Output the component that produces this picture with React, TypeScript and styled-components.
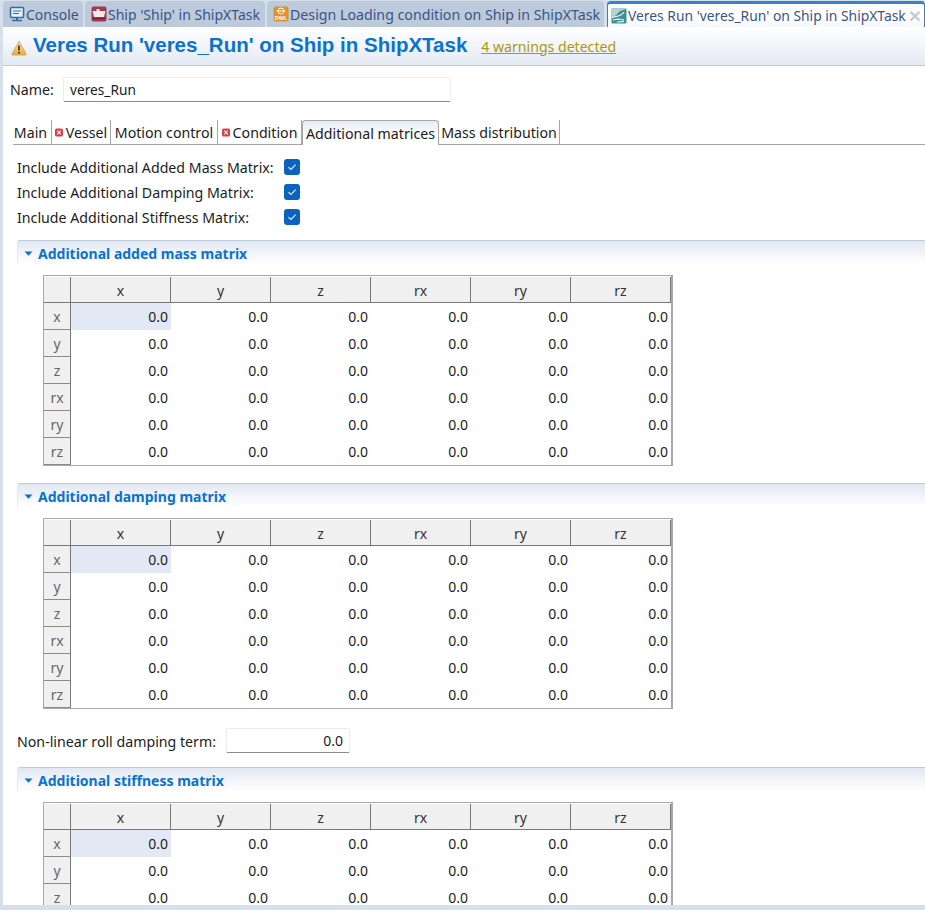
import React from "react";
import styled, { createGlobalStyle } from "styled-components";

const Global = createGlobalStyle`
  html, body { margin: 0; padding: 0; background: #d6e0ec; }
  body { font-family: "Noto Sans", "Liberation Sans", sans-serif; font-size: 14px; color: #1c1c1c; }
  * { box-sizing: border-box; }
`;

const Frame = styled.div`
  width: 925px; height: 910px; overflow: hidden; background: #d6e0ec;
  display: flex; flex-direction: column; padding: 0 0 5px 3px;
`;
const EditorTabs = styled.div`
  height: 27px; flex: none; display: flex; gap: 2px; padding-top: 1px; align-items: stretch;
`;
const EditorTab = styled.div<{ $w: number; $size: number; $active?: boolean }>`
  width: ${(p) => p.$w}px; flex: none; height: 26px;
  display: flex; align-items: center; gap: 1px; padding: 0 0 0 6px;
  font-size: ${(p) => p.$size}px; white-space: nowrap; overflow: hidden;
  color: #3b5488; border-radius: 4px 4px 0 0;
  background: ${(p) => (p.$active ? "linear-gradient(#fff, #fff 60%, #f4f7fb)" : "#bccadb")};
  ${(p) => p.$active && "border: 1px solid #3a82c8; border-top: 3px solid #3a82c8; border-bottom: 0; padding-left: 3px; margin-left: 1px;"}
  svg { flex: none; }
`;
const CloseMark = styled.span`
  margin-left: auto; margin-right: 3px; color: #c8cbce; font-size: 21px; font-weight: 700; line-height: 1;
  font-family: "Liberation Sans", sans-serif;
`;
const Page = styled.div`
  flex: 1; min-height: 0; overflow: hidden; background: #fff; display: flex; flex-direction: column;
`;
const Header = styled.div`
  height: 39px; flex: none; display: flex; align-items: center; padding-left: 8px; gap: 6px;
  background: linear-gradient(#fff, #e4eaf3);
  border-bottom: 1px solid #bfcbd6;
  svg { flex: none; margin-top: 4px; }
`;
const Title = styled.h1`
  margin: 0 0 2px; font: bold 20.5px "Liberation Sans", sans-serif; color: #0a72cf; white-space: nowrap;
`;
const Warnings = styled.a`
  margin-left: 8px; color: #a89a10; font-size: 14.1px; text-decoration: underline; white-space: nowrap;
`;
const Body = styled.div`
  flex: 1; min-height: 0; overflow: hidden; padding: 11px 0 0 0;
`;
const NameRow = styled.div`
  display: flex; align-items: center; padding-left: 7px; height: 25px;
`;
const NameLabel = styled.label`
  width: 53px; font-size: 14.2px;
`;
const NameField = styled.div`
  width: 388px; height: 25px; border: 1px solid #ececec; border-bottom: 1px solid #8a8a8a;
  border-radius: 2px; padding-left: 6px; display: flex; align-items: center; font-size: 13.7px;
`;
const FormTabs = styled.div`
  display: flex; height: 25px; margin: 18px 0 0 10px; border-bottom: 1px solid #a6a6a6; align-items: stretch;
`;
const FormTab = styled.div<{ $w: number; $active?: boolean; $inset?: number }>`
  width: ${(p) => p.$w}px; flex: none; display: flex; align-items: center; justify-content: center; gap: 3px;
  font-size: 14.2px; white-space: nowrap; padding-top: 1px;
  padding-right: ${(p) => p.$inset ?? 0}px;
  border-right: 1px solid #a6a6a6;
  ${(p) =>
    p.$active &&
    "border: 1px solid #a6a6a6; border-bottom: 0; border-radius: 4px 4px 0 0; background: linear-gradient(#e6ecf5, #fff 70%); margin-bottom: -1px;"}
`;
const Checks = styled.div`
  display: flex; flex-direction: column; margin-top: 9px; padding-left: 14px;
`;
const CheckRow = styled.div`
  height: 25px; display: flex; align-items: center; font-size: 14.2px;
`;
const CheckLabel = styled.span`
  width: 267px; white-space: nowrap; padding-top: 1px;
`;
const CheckBox = styled.span`
  width: 16px; height: 16px; border-radius: 3px; background: #0b63bd; display: flex; align-items: center; justify-content: center;
`;
const Section = styled.section<{ $top: number }>`
  margin: ${(p) => p.$top}px 0 0 14px;
`;
const SectionHead = styled.div`
  height: 24px; border-top: 1px solid #bccbda; border-left: 1px solid #e4eaf2; border-radius: 3px 0 0 0;
  background: linear-gradient(#e2e8f2, #fff);
  display: flex; align-items: center; padding: 1px 0 0 6px; gap: 5px;
  font: bold 14px "Noto Sans", sans-serif; color: #0a72cf;
`;
const Grid = styled.div`
  margin: 11px 0 0 26px; width: 630px; height: 191px; border: 2px solid #a8a8a8; border-width: 1px 2px 1px 1px;
  padding: 1px 1px 0 0; display: grid; grid-template-columns: 27px repeat(6, 100px); grid-template-rows: 26px repeat(6, 27px);
  align-content: start;
`;
const ColHead = styled.div`
  background: #f0f0f0; display: flex; align-items: center; justify-content: center; padding-top: 1px;
  border-right: 1px solid #787878; border-bottom: 1px solid #787878; color: #333; font-size: 14px;
`;
const RowHead = styled.div`
  background: #f0f0f0; display: flex; align-items: center; justify-content: center;
  border-right: 1px solid #787878; border-bottom: 1px solid #8c8c8c; color: #666; font-size: 14px;
`;
const Cell = styled.div<{ $sel?: boolean }>`
  display: flex; align-items: center; justify-content: flex-end; padding-right: 3px; font-size: 14px;
  color: #1c1c1c;
  background: ${(p) => (p.$sel ? "#e2e9f5" : "transparent")};
`;
const RollRow = styled.div`
  display: flex; align-items: center; height: 25px; margin: 19px 0 0 14px; font-size: 14.2px;
`;
const RollLabel = styled.span`
  width: 209px; white-space: nowrap; padding-top: 1px;
`;
const RollField = styled.div`
  width: 124px; height: 25px; border: 1px solid #ececec; border-bottom: 1px solid #8a8a8a; border-radius: 2px;
  display: flex; align-items: center; justify-content: flex-end; padding-right: 6px; font-size: 14px;
`;

const ConsoleIcon = () => (
  <svg width="16" height="16" viewBox="0 0 16 16">
    <rect x="1.5" y="1.5" width="13" height="10" rx="1" fill="#e8f1fa" stroke="#2f6ea8" strokeWidth="1.6" />
    <path d="M4 5h8M4 7.5h6" stroke="#2f6ea8" strokeWidth="1.2" />
    <path d="M3 14.5h10" stroke="#2f6ea8" strokeWidth="1.6" />
    <path d="M7 12h2v2H7z" fill="#2f6ea8" />
  </svg>
);
const ShipIcon = () => (
  <svg width="16" height="16" viewBox="0 0 16 16">
    <rect x="0.5" y="0.5" width="15" height="15" rx="2" fill="#a53a4c" />
    <path d="M1.5 5h4V3h3v2h6l-1.5 6H3z" fill="#f3e8ea" />
    <path d="M1 12.5h14" stroke="#7d2434" strokeWidth="1.5" />
  </svg>
);
const DwlIcon = () => (
  <svg width="16" height="16" viewBox="0 0 16 16">
    <rect x="0.5" y="0.5" width="15" height="15" rx="2" fill="#e2902a" />
    <circle cx="8" cy="5" r="3" fill="none" stroke="#fff" strokeWidth="1" />
    <path d="M3.5 5h9" stroke="#fff" strokeWidth="1" />
    <text x="8" y="14" textAnchor="middle" fontSize="5.5" fontWeight="700" fontFamily="Liberation Sans" fill="#fff">DWL</text>
  </svg>
);
const VeresIcon = () => (
  <svg width="16" height="16" viewBox="0 0 16 16">
    <rect x="0.5" y="0.5" width="15" height="15" rx="1" fill="#3f9092" />
    <path d="M0.5 10 Q6 7 9 3 L15.5 1 V0.5 H0.5z" fill="#b6d3d3" />
    <path d="M1 9.5l8-2 4-3M2 12l5-1 6 1M6 14l7-.5" stroke="#fff" strokeWidth="1.1" fill="none" />
  </svg>
);
const WarnIcon = () => (
  <svg width="16" height="16" viewBox="0 0 16 16">
    <defs>
      <linearGradient id="w" x1="0" y1="0" x2="0" y2="1">
        <stop offset="0" stopColor="#fbe7b0" />
        <stop offset="1" stopColor="#eda83a" />
      </linearGradient>
    </defs>
    <path d="M8 1.2 15 14a.7.7 0 0 1-.6 1H1.6a.7.7 0 0 1-.6-1z" fill="url(#w)" stroke="#c89a50" strokeWidth="0.8" />
    <path d="M8 5.5v5" stroke="#3d3520" strokeWidth="1.7" />
    <path d="M8 11.7v1.7" stroke="#3d3520" strokeWidth="1.7" />
  </svg>
);
const ErrorMark = () => (
  <svg width="8" height="9" viewBox="0 0 8 9">
    <rect x="0" y="0.5" width="8" height="8" rx="1.5" fill="#d8404c" />
    <path d="M2.2 2.7l3.6 3.6M5.8 2.7L2.2 6.3" stroke="#fff" strokeWidth="1.1" />
  </svg>
);
const Tick = () => (
  <svg width="10" height="8" viewBox="0 0 10 8">
    <path d="M1.5 4.2 4 6.4 8.6 1.6" fill="none" stroke="#dfeafa" strokeWidth="1.2" />
  </svg>
);
const Twisty = () => (
  <svg width="9" height="5" viewBox="0 0 9 5">
    <path d="M0.5 0.5h8L4.5 4.8z" fill="#0a72cf" />
  </svg>
);

const axes = ["x", "y", "z", "rx", "ry", "rz"];

const Matrix = () => (
  <Grid>
    <ColHead />
    {axes.map((a) => (
      <ColHead key={a}>{a}</ColHead>
    ))}
    {axes.map((r, ri) => (
      <React.Fragment key={r}>
        <RowHead>{r}</RowHead>
        {axes.map((c, ci) => (
          <Cell key={c} $sel={ri === 0 && ci === 0}>0.0</Cell>
        ))}
      </React.Fragment>
    ))}
  </Grid>
);

const MatrixSection = ({ title, top }: { title: string; top: number }) => (
  <Section $top={top}>
    <SectionHead>
      <Twisty />
      {title}
    </SectionHead>
    <Matrix />
  </Section>
);

export default function App() {
  return (
    <>
      <Global />
      <Frame>
        <EditorTabs>
          <EditorTab $w={80} $size={14}><ConsoleIcon />Console</EditorTab>
          <EditorTab $w={180} $size={14}><ShipIcon />Ship 'Ship' in ShipXTask</EditorTab>
          <EditorTab $w={337} $size={14.2}><DwlIcon />Design Loading condition on Ship in ShipXTask</EditorTab>
          <EditorTab $w={318} $size={13.85} $active><VeresIcon />Veres Run 'veres_Run' on Ship in ShipXTask<CloseMark>×</CloseMark></EditorTab>
        </EditorTabs>
        <Page>
          <Header>
            <WarnIcon />
            <Title>Veres Run 'veres_Run' on Ship in ShipXTask</Title>
            <Warnings>4 warnings detected</Warnings>
          </Header>
          <Body>
            <NameRow>
              <NameLabel>Name:</NameLabel>
              <NameField>veres_Run</NameField>
            </NameRow>
            <FormTabs>
              <FormTab $w={39} $inset={3}>Main</FormTab>
              <FormTab $w={59}><ErrorMark />Vessel</FormTab>
              <FormTab $w={107}>Motion control</FormTab>
              <FormTab $w={84}><ErrorMark />Condition</FormTab>
              <FormTab $w={137} $active>Additional matrices</FormTab>
              <FormTab $w={121}>Mass distribution</FormTab>
            </FormTabs>
            <Checks>
              <CheckRow><CheckLabel>Include Additional Added Mass Matrix:</CheckLabel><CheckBox><Tick /></CheckBox></CheckRow>
              <CheckRow><CheckLabel>Include Additional Damping Matrix:</CheckLabel><CheckBox><Tick /></CheckBox></CheckRow>
              <CheckRow><CheckLabel>Include Additional Stiffness Matrix:</CheckLabel><CheckBox><Tick /></CheckBox></CheckRow>
            </Checks>
            <MatrixSection title="Additional added mass matrix" top={11} />
            <MatrixSection title="Additional damping matrix" top={17} />
            <RollRow>
              <RollLabel>Non-linear roll damping term:</RollLabel>
              <RollField>0.0</RollField>
            </RollRow>
            <MatrixSection title="Additional stiffness matrix" top={14} />
          </Body>
        </Page>
      </Frame>
    </>
  );
}
